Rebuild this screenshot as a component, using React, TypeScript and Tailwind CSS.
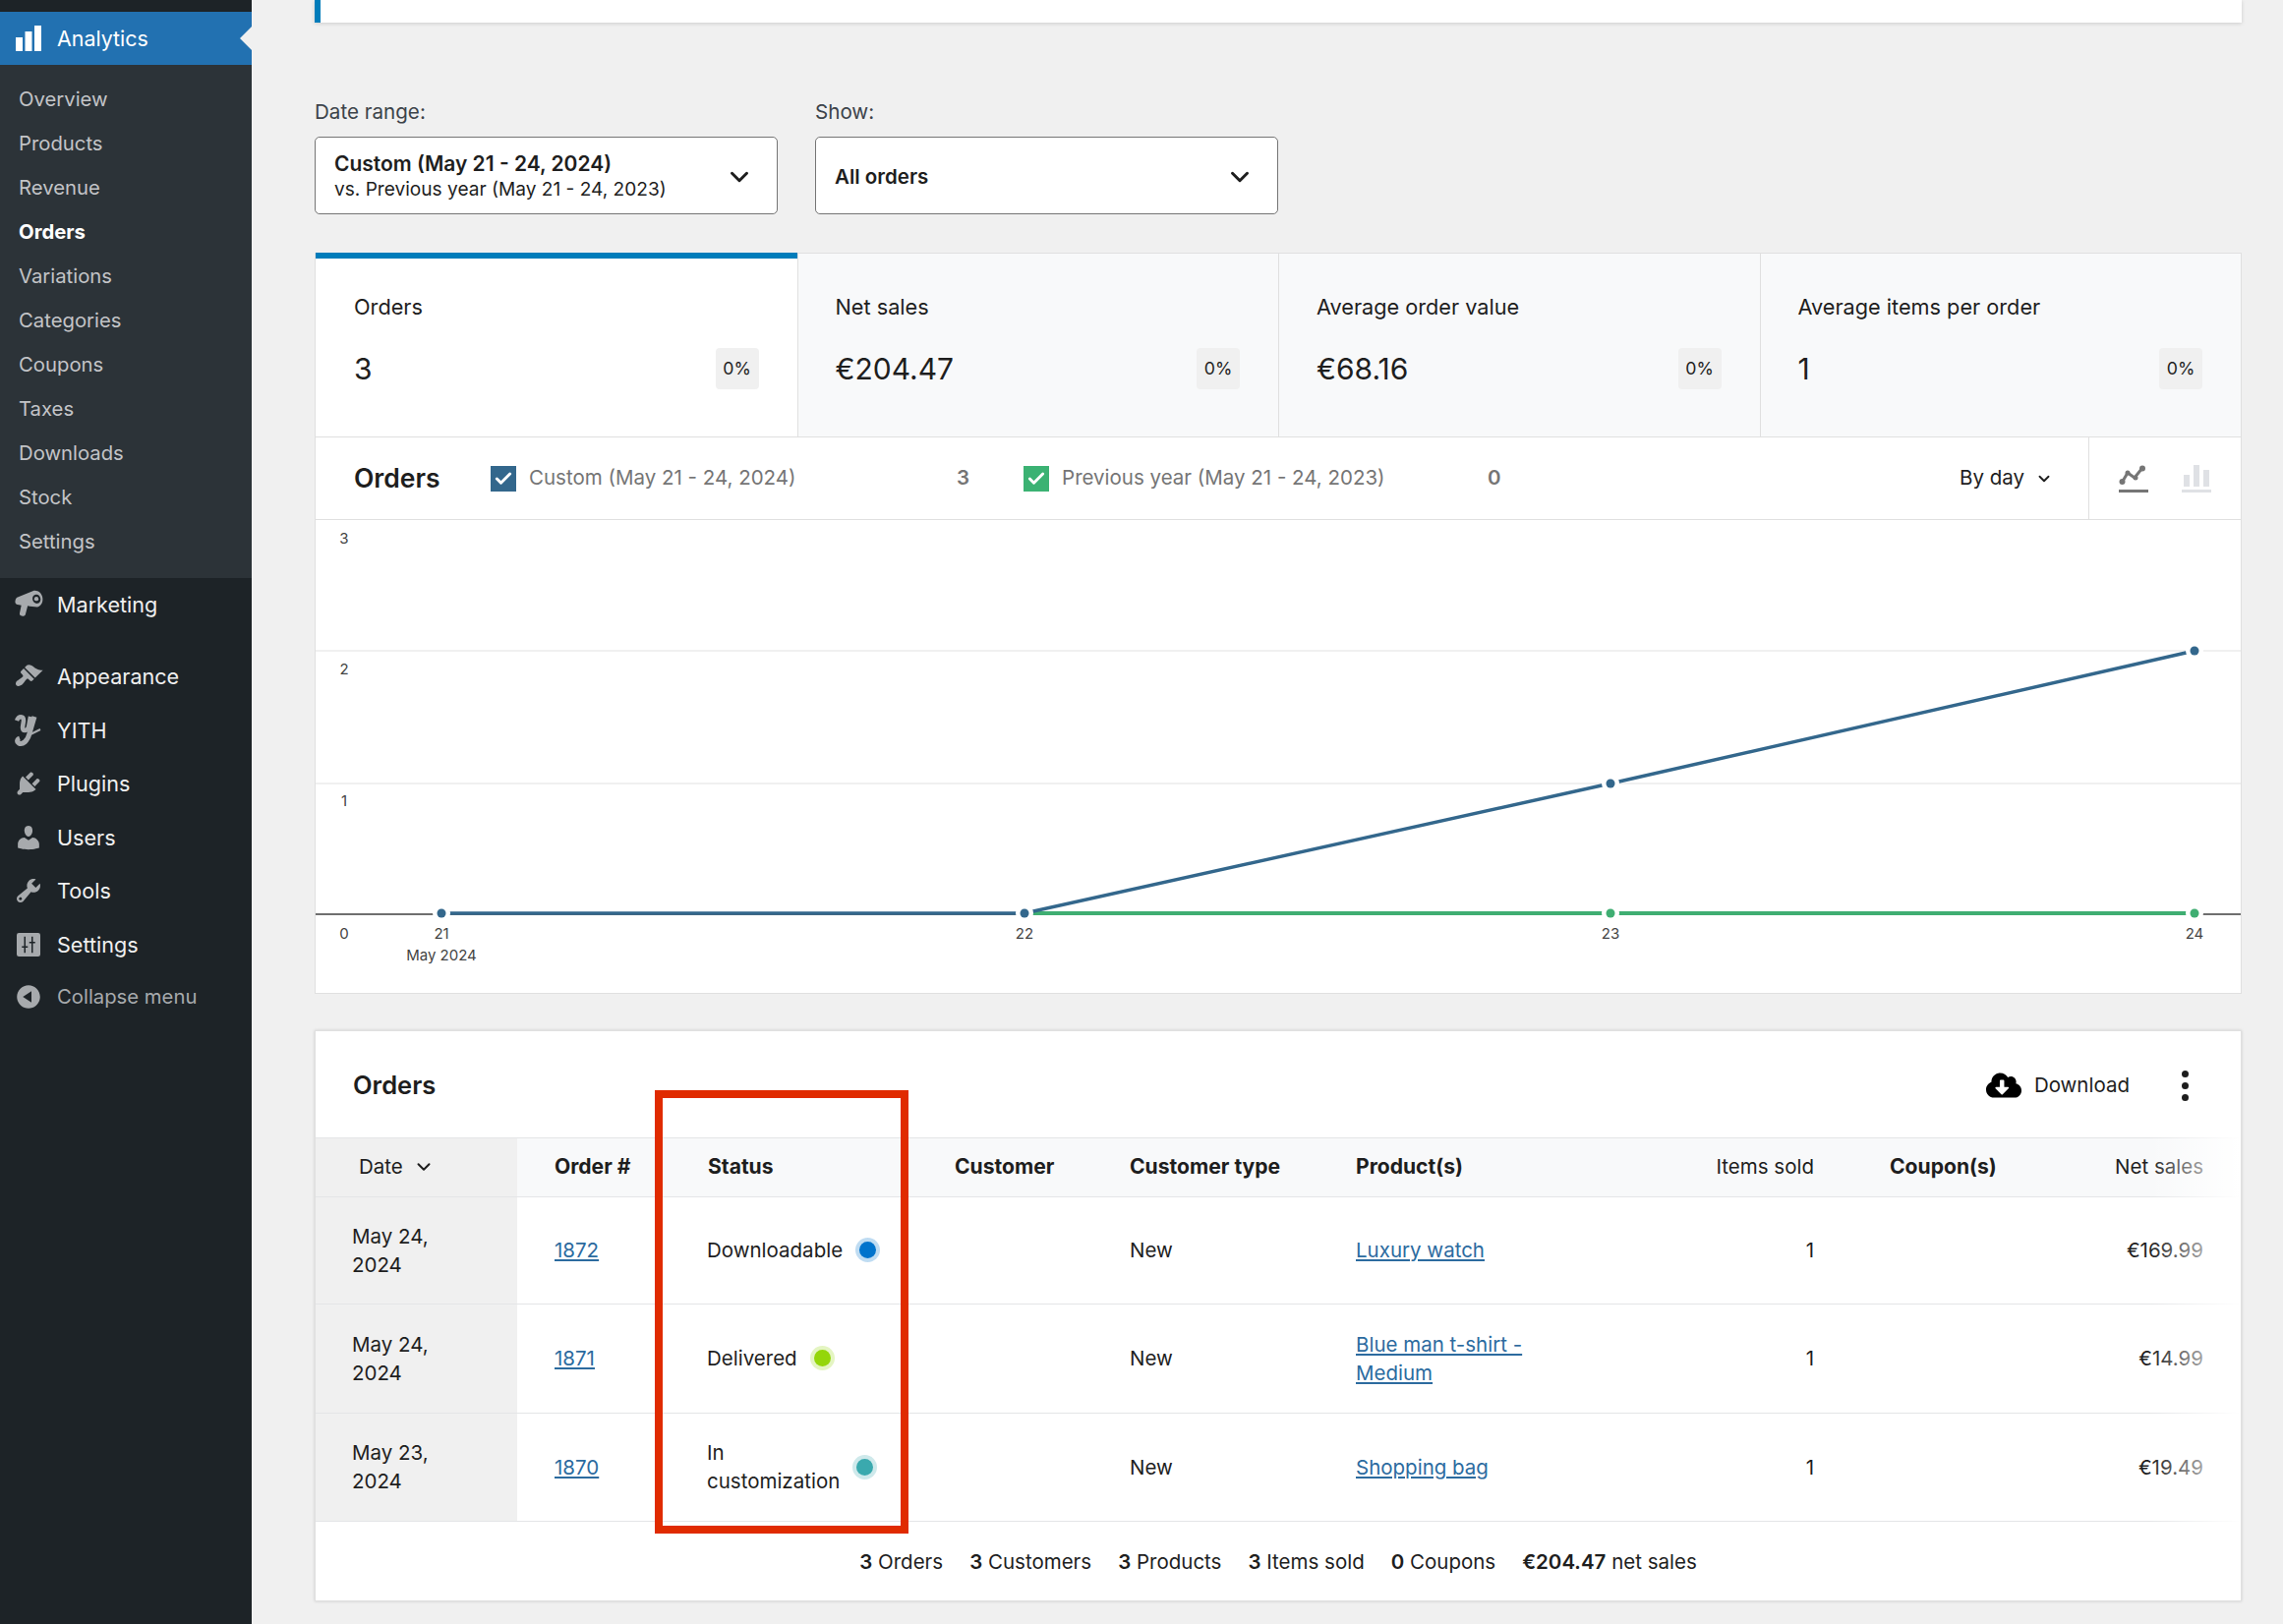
import { Check, ChevronDown } from 'lucide-react';
import { FaCloudDownloadAlt } from 'react-icons/fa';

const subItems = ['Overview', 'Products', 'Revenue', 'Orders', 'Variations', 'Categories', 'Coupons', 'Taxes', 'Downloads', 'Stock', 'Settings'];

function DashIcon({ d }: { d: string }) {
  return (
    <svg viewBox="0 0 20 20" className="w-[30px] h-[30px] fill-[#a7aaad]">
      <path d={d} />
    </svg>
  );
}

const Megaphone = (
  <svg viewBox="1 1.500 18 18" className="w-[30px] h-[30px] fill-[#a7aaad]">
    <path fillRule="evenodd" d="M12.600 2.200c2.600-.9 5.300.9 5.900 3.800.6 2.800-.8 5.500-3.200 6l-4.500-.5-1.300-.2-1.400 5.400c-.2.700-1 1-1.700.8l-1-.3c-.6-.2-.9-.8-.8-1.400l1-4.900-2.300-.4c-1-.2-1.600-1.100-1.400-2.100l.2-1.100c.1-.5.400-.9.900-1.200zm1.900 2.200c-1.400.1-2.300 1.500-2 3.100.3 1.500 1.600 2.600 3 2.300 1.300-.2 2.100-1.600 1.800-3.100-.3-1.500-1.500-2.500-2.800-2.300z" />
    <circle cx="14.800" cy="7" r="1.300" />
  </svg>
);

const SettingsIcon = (
  <svg viewBox="0 0 20 20" className="w-[30px] h-[30px]">
    <rect x="2" y="2" width="16" height="16" rx="1.500" className="fill-[#a7aaad]" />
    <path d="M7 4.500h1V11h1.500v1H8v3.500H7V12H5.500v-1H7zM12 15.500h1V9h1.500V8H13V4.500h-1V8h-1.500v1H12z" className="fill-[#1d2327]" />
  </svg>
);

const YithLogo = (
  <svg viewBox="0 0 30 34" className="w-[30px] h-[34px] fill-none stroke-[#a7aaad]">
    <path d="M3 7C5 2 10 2 10 7L9 14C9 18 13 18 15 14L17 3" strokeWidth="4.500" />
    <path d="M21 3L16 20C14 28 9 32 5 30C3 29 3 26 6 25" strokeWidth="5" />
    <path d="M15 22L27 16" strokeWidth="2" />
  </svg>
);

const mainItems = [
  { label: 'Appearance', icon: <DashIcon d="M14.480 11.060L7.410 3.990l1.500-1.500c.5-.56 2.300-.47 3.510.32 1.210.8 1.430 1.280 2.910 2.100 1.180.64 2.450 1.260 4.450.85zm-.71.71L6.700 4.700 4.930 6.470c-.39.39-.39 1.020 0 1.410l1.060 1.060c.39.39.39 1.030 0 1.420-.6.6-1.430 1.110-2.210 1.690-.35.26-.7.53-1.010.84C1.430 13.230.91 15.240 1.820 16.170c.92.92 2.930.4 4.270-.94.31-.31.58-.66.85-1.010.57-.78 1.080-1.610 1.690-2.210.39-.39 1.020-.39 1.410 0l1.060 1.060c.39.39 1.020.39 1.410 0z" /> },
  { label: 'YITH', icon: YithLogo },
  { label: 'Plugins', icon: <DashIcon d="M13.110 4.360L9.870 7.600 8 5.730l3.240-3.240c.35-.34 1.050-.2 1.560.32.52.51.66 1.210.31 1.550zm-8 1.770l.91-1.120 9.010 9.010-1.190.84c-.71.71-2.630 1.160-3.820 1.160H6.140L4.900 17.260c-.59.59-1.540.59-2.120 0-.59-.58-.59-1.530 0-2.120l1.240-1.240v-3.880c0-1.130.4-3.190 1.090-3.890zm7.260 3.970l3.240-3.240c.34-.35 1.040-.21 1.550.31.52.51.66 1.210.31 1.550l-3.240 3.250z" /> },
  { label: 'Users', icon: <DashIcon d="M10 9.250c-2.270 0-2.730-3.440-2.730-3.440C7 4.020 7.820 2 9.970 2c2.160 0 2.980 2.020 2.710 3.810 0 0-.41 3.440-2.680 3.440zm0 2.570L12.720 10c2.390 0 4.520 2.330 4.520 4.530v2.490s-3.650 1.130-7.240 1.130c-3.650 0-7.240-1.130-7.240-1.130v-2.490c0-2.250 1.940-4.480 4.470-4.480z" /> },
  { label: 'Tools', icon: <DashIcon d="M16.680 9.770c-1.340 1.340-3.300 1.670-4.950.99l-5.410 6.520c-.99.99-2.590.99-3.580 0s-.99-2.590 0-3.570l6.520-5.420c-.68-1.650-.35-3.610.99-4.950 1.280-1.280 3.120-1.620 4.720-1.060l-2.890 2.890 2.820 2.820 2.860-2.870c.53 1.580.18 3.390-1.080 4.650zM3.810 16.210c.4.39 1.040.39 1.430 0 .4-.4.4-1.040 0-1.430-.39-.4-1.030-.4-1.430 0-.39.39-.39 1.030 0 1.430z" /> },
  { label: 'Settings', icon: SettingsIcon },
];

const stats = [
  { label: 'Orders', value: '3' },
  { label: 'Net sales', value: '€204.47' },
  { label: 'Average order value', value: '€68.16' },
  { label: 'Average items per order', value: '1' },
];

const rows = [
  { date: 'May 24,', id: '1872', status: ['Downloadable'], dot: 'bg-[#0073cc] ring-[#0073cc]/25', product: ['Luxury watch'], total: '€169.99', h: 'h-[109px]' },
  { date: 'May 24,', id: '1871', status: ['Delivered'], dot: 'bg-[#94d60a] ring-[#94d60a]/25', product: ['Blue man t-shirt -', 'Medium'], total: '€14.99', h: 'h-[111px]' },
  { date: 'May 23,', id: '1870', status: ['In', 'customization'], dot: 'bg-[#3aa9ae] ring-[#3aa9ae]/25', product: ['Shopping bag'], total: '€19.49', h: 'h-[110px]' },
];

const totals = [
  ['3', 'Orders'],
  ['3', 'Customers'],
  ['3', 'Products'],
  ['3', 'Items sold'],
  ['0', 'Coupons'],
  ['€204.47', 'net sales'],
];

const gridCols = 'grid grid-cols-[205px_156px_251px_178px_230px_360px_183px_217px_178px]';

function Sidebar() {
  return (
    <aside className="w-[256px] h-[1652px] shrink-0 bg-[#1d2327] pt-[12px]">
      <div className="relative h-[54px] bg-[#2271b1] flex items-center pl-[16px] gap-[16px] text-white text-[21.4px]">
        <svg viewBox="0 0 26 26" className="w-[26px] h-[26px] fill-white">
          <rect x="0" y="12" width="7" height="14" />
          <rect x="9.500" y="6" width="7" height="20" />
          <rect x="19" y="0" width="7" height="26" />
        </svg>
        Analytics
        <span className="absolute right-0 top-[15px] border-y-[12px] border-y-transparent border-r-[12px] border-r-[#f0f0f0]" />
      </div>
      <ul className="bg-[#2c3338] pt-[13px] pb-[14px]">
        {subItems.map((item) => (
          <li
            key={item}
            className={`h-[45px] flex items-center pl-[19px] text-[20.3px] ${item === 'Orders' ? 'text-white font-bold' : 'text-[#c3c4c7]'}`}
          >
            {item}
          </li>
        ))}
      </ul>
      <div className="h-[54px] flex items-center pl-[14px] gap-[14px] text-[21.6px] text-[#f0f0f0]">
        {Megaphone}
        Marketing
      </div>
      <div className="mt-[19px]">
        {mainItems.map((item) => (
          <div key={item.label} className="h-[54.500px] flex items-center pl-[14px] gap-[14px] text-[21.6px] text-[#f0f0f0]">
            {item.icon}
            {item.label}
          </div>
        ))}
        <div className="h-[52px] flex items-center pl-[14px] gap-[14px] text-[20.3px] text-[#a7aaad]">
          <DashIcon d="M10 2.160c4.330 0 7.840 3.510 7.840 7.840s-3.510 7.840-7.840 7.840S2.160 14.330 2.160 10 5.710 2.160 10 2.160zm2 11.720V6.120L6.180 9.970z" />
          Collapse menu
        </div>
      </div>
    </aside>
  );
}

function Filter({ label, width, children }: { label: string; width: string; children: React.ReactNode }) {
  return (
    <div className={width}>
      <div className="h-[28px] flex items-center text-[20.6px] text-[#3c434a]">{label}</div>
      <div className="mt-[11px] h-[79px] rounded-[5px] border border-[#757575] bg-white flex items-center justify-between pl-[19px] pr-[23px]">
        <div>{children}</div>
        <ChevronDown size={30} strokeWidth={2.4} className="mt-[2px] text-[#1e1e1e]" />
      </div>
    </div>
  );
}

function Stats() {
  return (
    <div className="mt-[39px] grid grid-cols-4 h-[188px] border-x border-[#e0e0e0] border-b">
      {stats.map((s, i) => (
        <div
          key={s.label}
          className={`${i === 0 ? 'pl-[39px] pr-[39px] bg-white border-t-[6px] border-[#007cba] pt-[35px]' : 'pl-[38px] pr-[39px] bg-[#f8f9fa] border-t border-[#e0e0e0] border-l pt-[40px]'}`}
        >
          <div className="h-[29px] flex items-center text-[21.7px] text-[#1e1e1e]">{s.label}</div>
          <div className="mt-[27px] flex items-center justify-between">
            <span className="text-[30px] leading-[42px] text-[#1e1e1e]">{s.value}</span>
            <span className="w-[44px] h-[42px] rounded-[4px] bg-[#f0f0f0] flex items-center justify-center text-[17.700px] text-[#1e1e1e]">0%</span>
          </div>
        </div>
      ))}
    </div>
  );
}

function Legend({ color, label, value, labelWidth }: { color: string; label: string; value: string; labelWidth: string }) {
  return (
    <div className="flex items-center">
      <span className={`w-[26px] h-[26px] flex items-center justify-center ${color}`}>
        <Check size={20} strokeWidth={3.5} className="text-white" />
      </span>
      <span className={`ml-[13px] text-[20.5px] text-[#757575] ${labelWidth}`}>{label}</span>
      <span className="text-[20.5px] font-semibold text-[#757575]">{value}</span>
    </div>
  );
}

function Chart() {
  const ticks = [
    { x: 128, label: '21' },
    { x: 721, label: '22' },
    { x: 1317, label: '23' },
    { x: 1911, label: '24' },
  ];
  return (
    <svg viewBox="0 0 1958 481" className="block w-[1958px] h-[481px] text-[15px] fill-[#444]">
      <path d="M0 133H1958M0 268H1958" stroke="#f0f0f0" strokeWidth="2" fill="none" />
      <path d="M0 401H1958" stroke="#6f6f6f" strokeWidth="2" fill="none" />
      <path d="M721 400H1911" stroke="#3fae72" strokeWidth="4" fill="none" />
      <path d="M128 400H721L1317 268L1911 133" stroke="#33678c" strokeWidth="3.500" fill="none" />
      {[[128, 400, '#33678c'], [721, 400, '#33678c'], [1317, 400, '#3fae72'], [1911, 400, '#3fae72'], [1317, 268, '#33678c'], [1911, 133, '#33678c']].map(([x, y, c]) => (
        <g key={`${x}-${y}`}>
          <circle cx={x} cy={y} r="9" fill="#fff" />
          <circle cx={x} cy={y} r="4.500" fill={c as string} />
        </g>
      ))}
      {[['3', 24], ['2', 157], ['1', 291], ['0', 426]].map(([t, y]) => (
        <text key={t} x="29" y={y} textAnchor="middle">{t}</text>
      ))}
      {ticks.map((t) => (
        <text key={t.label} x={t.x} y="426" textAnchor="middle">{t.label}</text>
      ))}
      <text x="128" y="448" textAnchor="middle">May 2024</text>
    </svg>
  );
}

function ChartPanel() {
  return (
    <div className="border-x border-b border-[#e0e0e0] bg-white">
      <div className="h-[84px] flex items-center border-b border-[#e0e0e0] pl-[39px]">
        <span className="w-[139px] text-[26.5px] font-semibold text-[#1e1e1e]">Orders</span>
        <Legend color="bg-[#33678c]" label="Custom (May 21 - 24, 2024)" value="3" labelWidth="w-[435px]" />
        <div className="ml-[55px]">
          <Legend color="bg-[#3bb273]" label="Previous year (May 21 - 24, 2023)" value="0" labelWidth="w-[433px]" />
        </div>
        <div className="ml-auto flex items-center gap-[11px] pr-[36px] text-[20.5px] text-[#1e1e1e]">
          By day
          <ChevronDown size={18} strokeWidth={2.5} />
        </div>
        <div className="h-full w-[155px] border-l border-[#e0e0e0] flex items-center justify-center gap-[34px]">
          <svg viewBox="0 0 30 30" className="w-[30px] h-[30px]">
            <path d="M3 19L9 9L16 14L24 4" stroke="#757575" strokeWidth="3" fill="none" />
            <circle cx="3.500" cy="18" r="3" fill="#757575" />
            <circle cx="9" cy="9" r="2.500" fill="#757575" />
            <circle cx="17" cy="14" r="2.500" fill="#757575" />
            <circle cx="24" cy="4.500" r="3" fill="#757575" />
            <rect x="0" y="26" width="30" height="3" fill="#757575" />
          </svg>
          <svg viewBox="0 0 30 30" className="w-[30px] h-[30px] fill-[#dfe1e5]">
            <rect x="2" y="11" width="6" height="12" />
            <rect x="12" y="1" width="6" height="22" />
            <rect x="22" y="6" width="6" height="17" />
            <rect x="0" y="26" width="30" height="3" />
          </svg>
        </div>
      </div>
      <Chart />
    </div>
  );
}

function OrdersTable() {
  const th = 'flex items-center pl-[38px] font-bold text-[21.1px]';
  return (
    <div className="relative mt-[37px] bg-white border border-[#e0e0e0] shadow-[0_0_3px_rgba(0,0,0,0.15)] text-[20.5px] text-[#1e1e1e]">
      <div className="h-[107.500px] flex items-center justify-between pl-[38px] pr-[53px] pt-[3px]">
        <span className="text-[25.5px] font-semibold">Orders</span>
        <div className="flex items-center">
          <FaCloudDownloadAlt size={36} className="text-black" />
          <span className="ml-[13px]">Download</span>
          <span className="ml-[53px] flex flex-col gap-[5px]">
            <span className="w-[7px] h-[7px] rounded-full bg-[#1e1e1e]" />
            <span className="w-[7px] h-[7px] rounded-full bg-[#1e1e1e]" />
            <span className="w-[7px] h-[7px] rounded-full bg-[#1e1e1e]" />
          </span>
        </div>
      </div>
      <div className={`${gridCols} h-[61px] bg-[#f8f9fa] border-y border-[#e4e5e7]`}>
        <div className="bg-[#f0f0f0] flex items-center pl-[44px] gap-[10px]">
          Date
          <ChevronDown size={22} strokeWidth={2.2} />
        </div>
        <div className={th}>Order #</div>
        <div className={th}>Status</div>
        <div className={th}>Customer</div>
        <div className={th}>Customer type</div>
        <div className={th}>Product(s)</div>
        <div className="flex items-center justify-end pr-[39px]">Items sold</div>
        <div className={th}>Coupon(s)</div>
        <div className="flex items-center justify-end pr-[38px]">Net sales</div>
      </div>
      {rows.map((r) => (
        <div key={r.id} className={`${gridCols} ${r.h} border-b border-[#e4e5e7] leading-[29px]`}>
          <div className="bg-[#f0f0f0] flex items-center pl-[37px]">
            <span>{r.date}<br />2024</span>
          </div>
          <div className="flex items-center pl-[38px]">
            <a className="underline text-[#2c6b9f]">{r.id}</a>
          </div>
          <div className="flex items-center pl-[37px] gap-[17px]">
            <span>
              {r.status.map((s) => (
                <span key={s} className="block">{s}</span>
              ))}
            </span>
            <span className={`w-[17px] h-[17px] rounded-full ring-[4px] ${r.dot}`} />
          </div>
          <div />
          <div className="flex items-center pl-[38px]">New</div>
          <div className="flex items-center pl-[38px]">
            <a className="underline text-[#2c6b9f]">
              {r.product.map((p) => (
                <span key={p} className="block">{p}</span>
              ))}
            </a>
          </div>
          <div className="flex items-center justify-end pr-[39px]">1</div>
          <div />
          <div className="flex items-center justify-end pr-[38px]">{r.total}</div>
        </div>
      ))}
      <div className="absolute right-0 top-[107px] w-[94px] h-[392px] bg-linear-to-r from-transparent to-white" />
      <div className="h-[80px] flex items-center justify-center gap-[27px] pt-[3px]">
        {totals.map(([n, t]) => (
          <span key={t}>
            <b className="font-semibold">{n}</b> {t}
          </span>
        ))}
      </div>
      <div className="absolute left-[345px] top-[60px] w-[258px] h-[451px] border-[8px] border-[#e02b00]" />
    </div>
  );
}

export default function App() {
  return (
    <div className="flex h-[1652px] w-[2322px] overflow-hidden bg-[#f0f0f0] [font-family:Inter,'Liberation_Sans',sans-serif]">
      <Sidebar />
      <main className="w-[1960px] ml-[64px]">
        <div className="h-[23px] bg-white border-l-[6px] border-[#007cba] shadow-[0_1px_4px_rgba(0,0,0,0.15)]" />
        <div className="mt-[77px] flex gap-[38px]">
          <Filter label="Date range:" width="w-[471px]">
            <div className="text-[21px] leading-[27px] font-semibold text-[#1e1e1e]">Custom (May 21 - 24, 2024)</div>
            <div className="text-[19.100px] leading-[25px] text-[#1e1e1e]">vs. Previous year (May 21 - 24, 2023)</div>
          </Filter>
          <Filter label="Show:" width="w-[471px]">
            <div className="mt-[3px] text-[20.5px] font-semibold text-[#1e1e1e]">All orders</div>
          </Filter>
        </div>
        <Stats />
        <ChartPanel />
        <OrdersTable />
      </main>
    </div>
  );
}
